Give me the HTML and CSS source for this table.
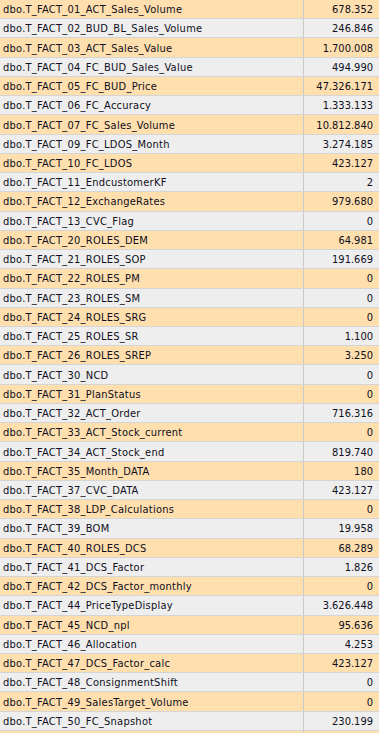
FILE: index.html
```html
<!DOCTYPE html>
<html>
<head>
<meta charset="utf-8">
<link rel="stylesheet" href="styles.css">
</head>
<body>
<div class="grid">
<div class="row o"><div class="name">dbo.T_FACT_01_ACT_Sales_Volume</div><div class="val">678.352</div></div>
<div class="row g"><div class="name">dbo.T_FACT_02_BUD_BL_Sales_Volume</div><div class="val">246.846</div></div>
<div class="row o"><div class="name">dbo.T_FACT_03_ACT_Sales_Value</div><div class="val">1.700.008</div></div>
<div class="row g"><div class="name">dbo.T_FACT_04_FC_BUD_Sales_Value</div><div class="val">494.990</div></div>
<div class="row o"><div class="name">dbo.T_FACT_05_FC_BUD_Price</div><div class="val">47.326.171</div></div>
<div class="row g"><div class="name">dbo.T_FACT_06_FC_Accuracy</div><div class="val">1.333.133</div></div>
<div class="row o"><div class="name">dbo.T_FACT_07_FC_Sales_Volume</div><div class="val">10.812.840</div></div>
<div class="row g"><div class="name">dbo.T_FACT_09_FC_LDOS_Month</div><div class="val">3.274.185</div></div>
<div class="row o"><div class="name">dbo.T_FACT_10_FC_LDOS</div><div class="val">423.127</div></div>
<div class="row g"><div class="name">dbo.T_FACT_11_EndcustomerKF</div><div class="val">2</div></div>
<div class="row o"><div class="name">dbo.T_FACT_12_ExchangeRates</div><div class="val">979.680</div></div>
<div class="row g"><div class="name">dbo.T_FACT_13_CVC_Flag</div><div class="val">0</div></div>
<div class="row o"><div class="name">dbo.T_FACT_20_ROLES_DEM</div><div class="val">64.981</div></div>
<div class="row g"><div class="name">dbo.T_FACT_21_ROLES_SOP</div><div class="val">191.669</div></div>
<div class="row o"><div class="name">dbo.T_FACT_22_ROLES_PM</div><div class="val">0</div></div>
<div class="row g"><div class="name">dbo.T_FACT_23_ROLES_SM</div><div class="val">0</div></div>
<div class="row o"><div class="name">dbo.T_FACT_24_ROLES_SRG</div><div class="val">0</div></div>
<div class="row g"><div class="name">dbo.T_FACT_25_ROLES_SR</div><div class="val">1.100</div></div>
<div class="row o"><div class="name">dbo.T_FACT_26_ROLES_SREP</div><div class="val">3.250</div></div>
<div class="row g"><div class="name">dbo.T_FACT_30_NCD</div><div class="val">0</div></div>
<div class="row o"><div class="name">dbo.T_FACT_31_PlanStatus</div><div class="val">0</div></div>
<div class="row g"><div class="name">dbo.T_FACT_32_ACT_Order</div><div class="val">716.316</div></div>
<div class="row o"><div class="name">dbo.T_FACT_33_ACT_Stock_current</div><div class="val">0</div></div>
<div class="row g"><div class="name">dbo.T_FACT_34_ACT_Stock_end</div><div class="val">819.740</div></div>
<div class="row o"><div class="name">dbo.T_FACT_35_Month_DATA</div><div class="val">180</div></div>
<div class="row g"><div class="name">dbo.T_FACT_37_CVC_DATA</div><div class="val">423.127</div></div>
<div class="row o"><div class="name">dbo.T_FACT_38_LDP_Calculations</div><div class="val">0</div></div>
<div class="row g"><div class="name">dbo.T_FACT_39_BOM</div><div class="val">19.958</div></div>
<div class="row o"><div class="name">dbo.T_FACT_40_ROLES_DCS</div><div class="val">68.289</div></div>
<div class="row g"><div class="name">dbo.T_FACT_41_DCS_Factor</div><div class="val">1.826</div></div>
<div class="row o"><div class="name">dbo.T_FACT_42_DCS_Factor_monthly</div><div class="val">0</div></div>
<div class="row g"><div class="name">dbo.T_FACT_44_PriceTypeDisplay</div><div class="val">3.626.448</div></div>
<div class="row o"><div class="name">dbo.T_FACT_45_NCD_npl</div><div class="val">95.636</div></div>
<div class="row g"><div class="name">dbo.T_FACT_46_Allocation</div><div class="val">4.253</div></div>
<div class="row o"><div class="name">dbo.T_FACT_47_DCS_Factor_calc</div><div class="val">423.127</div></div>
<div class="row g"><div class="name">dbo.T_FACT_48_ConsignmentShift</div><div class="val">0</div></div>
<div class="row o"><div class="name">dbo.T_FACT_49_SalesTarget_Volume</div><div class="val">0</div></div>
<div class="row g"><div class="name">dbo.T_FACT_50_FC_Snapshot</div><div class="val">230.199</div></div>
<div class="row o"><div class="name"></div><div class="val"></div></div>
</div>
</body>
</html>
```

FILE: styles.css
```css
html, body {
  margin: 0;
  padding: 0;
  overflow: hidden;
  background: #ffffff;
}
.grid {
  display: flex;
  flex-direction: column;
  width: 379px;
  font-family: "DejaVu Sans Condensed", "DejaVu Sans", sans-serif;
  font-size: 11px;
  color: #0e0e1c;
}
.row {
  display: grid;
  grid-template-columns: 304px 1fr;
  height: 19.24px;
  box-sizing: border-box;
  border-bottom: 1px solid #d5d5d5;
}
.row.o { background: #ffdfae; }
.row.g { background: #eeeeee; }
.name {
  display: flex;
  align-items: center;
  padding-left: 3px;
  padding-top: 1px;
  letter-spacing: 0.25px;
  border-right: 1px solid #c9c9c9;
  white-space: nowrap;
  overflow: hidden;
}
.val {
  display: flex;
  align-items: center;
  justify-content: flex-end;
  padding-right: 6px;
  padding-top: 1px;
  white-space: nowrap;
}
```
